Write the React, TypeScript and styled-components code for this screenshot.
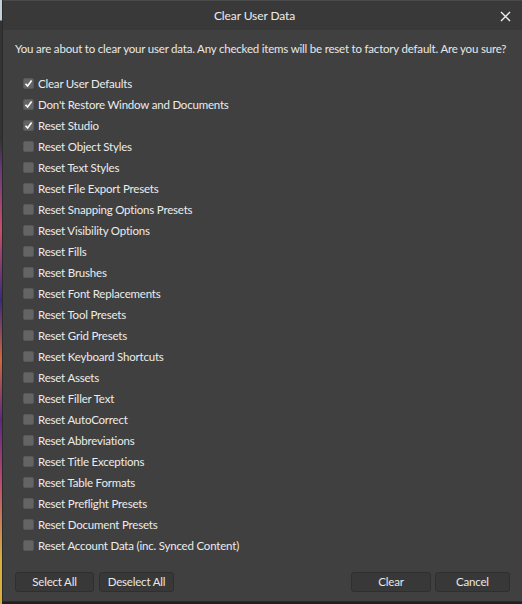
import React from "react";
import styled, { createGlobalStyle } from "styled-components";

const Global = createGlobalStyle`
  html, body { margin: 0; padding: 0; background: #202020; }
  body { font-family: "Segoe UI", Lato, "Noto Sans", sans-serif; }
  * { box-sizing: border-box; }
`;

const Screen = styled.div`
  display: flex;
  width: 522px;
  height: 604px;
  background: #202020;
  align-items: flex-start;
  overflow: hidden;
`;

const Backdrop = styled.div`
  width: 2px;
  height: 604px;
  flex: none;
  background: linear-gradient(
    to bottom,
    #c3d0d9 0px,
    #c3d0d9 20px,
    #333 21px,
    #333 140px,
    #6a3a7a 170px,
    #c8506a 230px,
    #3a2a7a 300px,
    #d06840 360px,
    #5a2a80 420px,
    #b84a70 480px,
    #d8b040 560px,
    #d8b040 604px
  );
`;

const Dialog = styled.div`
  flex: 1;
  min-width: 0;
  height: 602px;
  display: flex;
  flex-direction: column;
  background: #404040;
  border-left: 1px solid #2b2b2b;
  border-bottom: 1px solid #2b2b2b;
  color: #e8e8e8;
  font-size: 11.5px;
  letter-spacing: -0.2px;
`;

const TitleBar = styled.div`
  height: 30px;
  flex: none;
  display: flex;
  align-items: center;
  justify-content: center;
  position: relative;
  padding-right: 16px;
  background: #393939;
  border-top: 1px solid #4a4a4a;
  font-size: 12px;
  letter-spacing: -0.1px;
  color: #ececec;
`;

const CloseButton = styled.button`
  position: absolute;
  right: 10px;
  top: 8px;
  width: 14px;
  height: 14px;
  padding: 0;
  border: none;
  background: transparent;
  display: flex;
  align-items: center;
  justify-content: center;
  cursor: pointer;
`;

const Message = styled.div`
  padding: 11px 0 0 12px;
  height: 34px;
  line-height: 16px;
  white-space: nowrap;
`;

const List = styled.div`
  display: flex;
  flex-direction: column;
  padding: 9px 0 0 20px;
`;

const Row = styled.label`
  display: flex;
  align-items: center;
  height: 21px;
  gap: 4px;
  color: #ececec;
`;

const Box = styled.span<{ $checked: boolean }>`
  width: 11px;
  height: 11px;
  flex: none;
  border-radius: 2px;
  background: #646464;
  border: 1px solid #585858;
  display: flex;
  align-items: center;
  justify-content: center;
`;

const Footer = styled.div`
  margin-top: auto;
  display: flex;
  align-items: center;
  padding: 0 12px 9px 12px;
`;

const Group = styled.div<{ $gap: number }>`
  display: flex;
  gap: ${(p) => p.$gap}px;
`;

const Spacer = styled.div`
  flex: 1;
`;

const Button = styled.button<{ $w: number }>`
  width: ${(p) => p.$w}px;
  height: 20px;
  border-radius: 3px;
  border: 1px solid #2f2f2f;
  background: #383838;
  color: #e8e8e8;
  font-family: inherit;
  font-size: 11.5px;
  letter-spacing: -0.2px;
  padding: 0;
  line-height: 18px;
`;

const items: [string, boolean][] = [
  ["Clear User Defaults", true],
  ["Don't Restore Window and Documents", true],
  ["Reset Studio", true],
  ["Reset Object Styles", false],
  ["Reset Text Styles", false],
  ["Reset File Export Presets", false],
  ["Reset Snapping Options Presets", false],
  ["Reset Visibility Options", false],
  ["Reset Fills", false],
  ["Reset Brushes", false],
  ["Reset Font Replacements", false],
  ["Reset Tool Presets", false],
  ["Reset Grid Presets", false],
  ["Reset Keyboard Shortcuts", false],
  ["Reset Assets", false],
  ["Reset Filler Text", false],
  ["Reset AutoCorrect", false],
  ["Reset Abbreviations", false],
  ["Reset Title Exceptions", false],
  ["Reset Table Formats", false],
  ["Reset Preflight Presets", false],
  ["Reset Document Presets", false],
  ["Reset Account Data (inc. Synced Content)", false],
];

const Check = () => (
  <svg width="9" height="9" viewBox="0 0 9 9">
    <path d="M1.5 4.8 L3.6 7 L7.6 1.6" fill="none" stroke="#fff" strokeWidth="1.6" />
  </svg>
);

export default function App() {
  return (
    <>
      <Global />
      <Screen>
        <Backdrop />
        <Dialog>
          <TitleBar>
            Clear User Data
            <CloseButton aria-label="Close">
              <svg width="11" height="11" viewBox="0 0 11 11">
                <path d="M1 1 L10 10 M10 1 L1 10" stroke="#f0f0f0" strokeWidth="1.4" />
              </svg>
            </CloseButton>
          </TitleBar>
          <Message>
            You are about to clear your user data. Any checked items will be reset to factory default. Are you sure?
          </Message>
          <List>
            {items.map(([label, checked]) => (
              <Row key={label}>
                <Box $checked={checked}>{checked && <Check />}</Box>
                {label}
              </Row>
            ))}
          </List>
          <Footer>
            <Group $gap={5}>
              <Button $w={79}>Select All</Button>
              <Button $w={75}>Deselect All</Button>
            </Group>
            <Spacer />
            <Group $gap={4}>
              <Button $w={80}>Clear</Button>
              <Button $w={75}>Cancel</Button>
            </Group>
          </Footer>
        </Dialog>
      </Screen>
    </>
  );
}
